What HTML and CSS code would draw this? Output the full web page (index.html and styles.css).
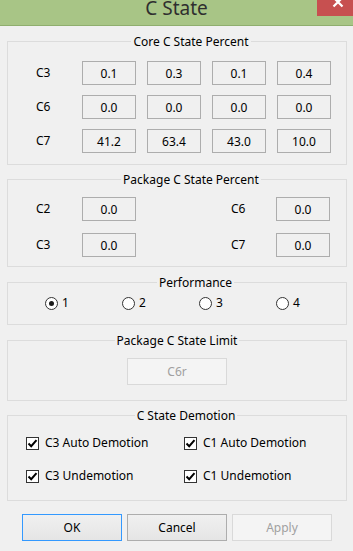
FILE: index.html
```html
<!DOCTYPE html>
<html>
<head>
<meta charset="utf-8">
<link rel="stylesheet" href="styles.css">
</head>
<body>
<div class="window">
  <div class="titlebar">
    <span class="title">C State</span>
    <div class="close">
      <svg width="36" height="16" viewBox="0 0 36 16"><path d="M16.5 -2.5 L25.5 6.5 M25.5 -2.5 L16.5 6.5" stroke="#fff" stroke-width="2.2" fill="none"/></svg>
    </div>
  </div>
  <div class="content">
    <fieldset class="group g-core">
      <legend>Core C State Percent</legend>
      <div class="core-grid">
        <span class="lbl">C3</span><span class="val">0.1</span><span class="val">0.3</span><span class="val">0.1</span><span class="val">0.4</span>
        <span class="lbl">C6</span><span class="val">0.0</span><span class="val">0.0</span><span class="val">0.0</span><span class="val">0.0</span>
        <span class="lbl">C7</span><span class="val">41.2</span><span class="val">63.4</span><span class="val">43.0</span><span class="val">10.0</span>
      </div>
    </fieldset>

    <fieldset class="group g-pkg">
      <legend>Package C State Percent</legend>
      <div class="pkg-grid">
        <span class="lbl">C2</span><span class="val">0.0</span><span></span><span class="lbl">C6</span><span class="val">0.0</span>
        <span class="lbl">C3</span><span class="val">0.0</span><span></span><span class="lbl">C7</span><span class="val">0.0</span>
      </div>
    </fieldset>

    <fieldset class="group g-perf">
      <legend>Performance</legend>
      <div class="radio-row">
        <label class="radio"><span class="circle on"></span>1</label>
        <label class="radio"><span class="circle"></span>2</label>
        <label class="radio"><span class="circle"></span>3</label>
        <label class="radio"><span class="circle"></span>4</label>
      </div>
    </fieldset>

    <fieldset class="group g-limit">
      <legend>Package C State Limit</legend>
      <div class="limit-row"><span class="btn disabled">C6r</span></div>
    </fieldset>

    <fieldset class="group g-dem">
      <legend>C State Demotion</legend>
      <div class="check-grid">
        <label class="check"><span class="box"><svg width="11" height="11" viewBox="0 0 11 11"><path d="M1.5 5.5 L4.2 8.2 L9.5 2.2" stroke="#000" stroke-width="2" fill="none"/></svg></span>C3 Auto Demotion</label>
        <label class="check"><span class="box"><svg width="11" height="11" viewBox="0 0 11 11"><path d="M1.5 5.5 L4.2 8.2 L9.5 2.2" stroke="#000" stroke-width="2" fill="none"/></svg></span>C1 Auto Demotion</label>
        <label class="check"><span class="box"><svg width="11" height="11" viewBox="0 0 11 11"><path d="M1.5 5.5 L4.2 8.2 L9.5 2.2" stroke="#000" stroke-width="2" fill="none"/></svg></span>C3 Undemotion</label>
        <label class="check"><span class="box"><svg width="11" height="11" viewBox="0 0 11 11"><path d="M1.5 5.5 L4.2 8.2 L9.5 2.2" stroke="#000" stroke-width="2" fill="none"/></svg></span>C1 Undemotion</label>
      </div>
    </fieldset>

    <div class="buttons">
      <span class="btn default">OK</span>
      <span class="btn">Cancel</span>
      <span class="btn disabled">Apply</span>
    </div>
  </div>
</div>
</body>
</html>
```

FILE: styles.css
```css
* { box-sizing: border-box; }
html, body { margin: 0; padding: 0; }
body {
  background: #f0f0f0;
  font-family: "Noto Sans", "DejaVu Sans", sans-serif;
  font-size: 12px;
  color: #000;
  width: 353px;
  height: 551px;
  overflow: hidden;
}
.titlebar {
  position: relative;
  height: 26px;
  background: #a8c586;
  border-bottom: 1px solid #8fae6e;
  display: flex;
  justify-content: center;
  align-items: flex-start;
}
.title {
  font-size: 19px;
  line-height: 17px;
  height: 20px;
  color: #2f2f2f;
}
.close {
  position: absolute;
  top: 0;
  right: 0;
  width: 36px;
  height: 16px;
  background: #c75050;
}
.close svg { display: block; }
.content {
  padding: 0 6px 0 7px;
}
.group {
  margin: 0;
  border: 1px solid #dcdcdc;
  min-width: 0;
}
.group legend {
  margin: 0 auto;
  padding: 0 2px;
  line-height: 17px;
  height: 17px;
}
.g-core { margin-top: 7px; padding: 11px 0 11px 28px; }
.g-pkg { margin-top: 6px; padding: 9px 0 9px 28px; }
.g-perf { margin-top: 7px; padding: 4px 0 13px 37px; }
.g-limit { margin-top: 7px; padding: 9px 0 15px 0; }
.g-dem { margin-top: 6px; padding: 11px 0 16px 18px; }

.core-grid {
  display: grid;
  grid-template-columns: 35px 54px 54px 54px 54px;
  column-gap: 11px;
  row-gap: 10px;
  align-items: center;
}
.pkg-grid {
  display: grid;
  grid-template-columns: 46px 54px 95px 45px 54px;
  row-gap: 12px;
  align-items: center;
}
.val {
  height: 24px;
  border: 1px solid #adadad;
  background: #f0f0f0;
  display: flex;
  align-items: center;
  justify-content: center;
}
.lbl { line-height: 16px; }

.radio-row {
  display: grid;
  grid-template-columns: repeat(4, 77px);
  height: 16px;
  align-items: center;
}
.radio {
  display: flex;
  align-items: center;
  line-height: 16px;
}
.circle {
  width: 13px;
  height: 13px;
  border: 1px solid #333;
  border-radius: 50%;
  background: #fff;
  margin-right: 4px;
  display: flex;
  align-items: center;
  justify-content: center;
}
.circle.on::after {
  content: "";
  width: 5px;
  height: 5px;
  border-radius: 50%;
  background: #1a1a1a;
}

.limit-row { display: flex; justify-content: center; }

.check-grid {
  display: grid;
  grid-template-columns: 158px 1fr;
  row-gap: 17px;
}
.check {
  display: flex;
  align-items: center;
  line-height: 16px;
  height: 16px;
}
.box {
  width: 13px;
  height: 13px;
  border: 1px solid #333;
  background: #fff;
  margin-right: 6px;
  display: flex;
  align-items: center;
  justify-content: center;
}
.box svg { display: block; }

.buttons {
  display: flex;
  gap: 5px;
  margin-top: 13px;
  padding-left: 15px;
}
.btn {
  width: 100px;
  height: 27px;
  border: 1px solid #adadad;
  background: linear-gradient(#f0f0f0, #e5e5e5);
  display: flex;
  align-items: center;
  justify-content: center;
}
.btn.default { border-color: #3399ff; }
.btn.disabled {
  border-color: #d9d9d9;
  background: #f4f4f4;
  color: #a0a0a0;
}
```
